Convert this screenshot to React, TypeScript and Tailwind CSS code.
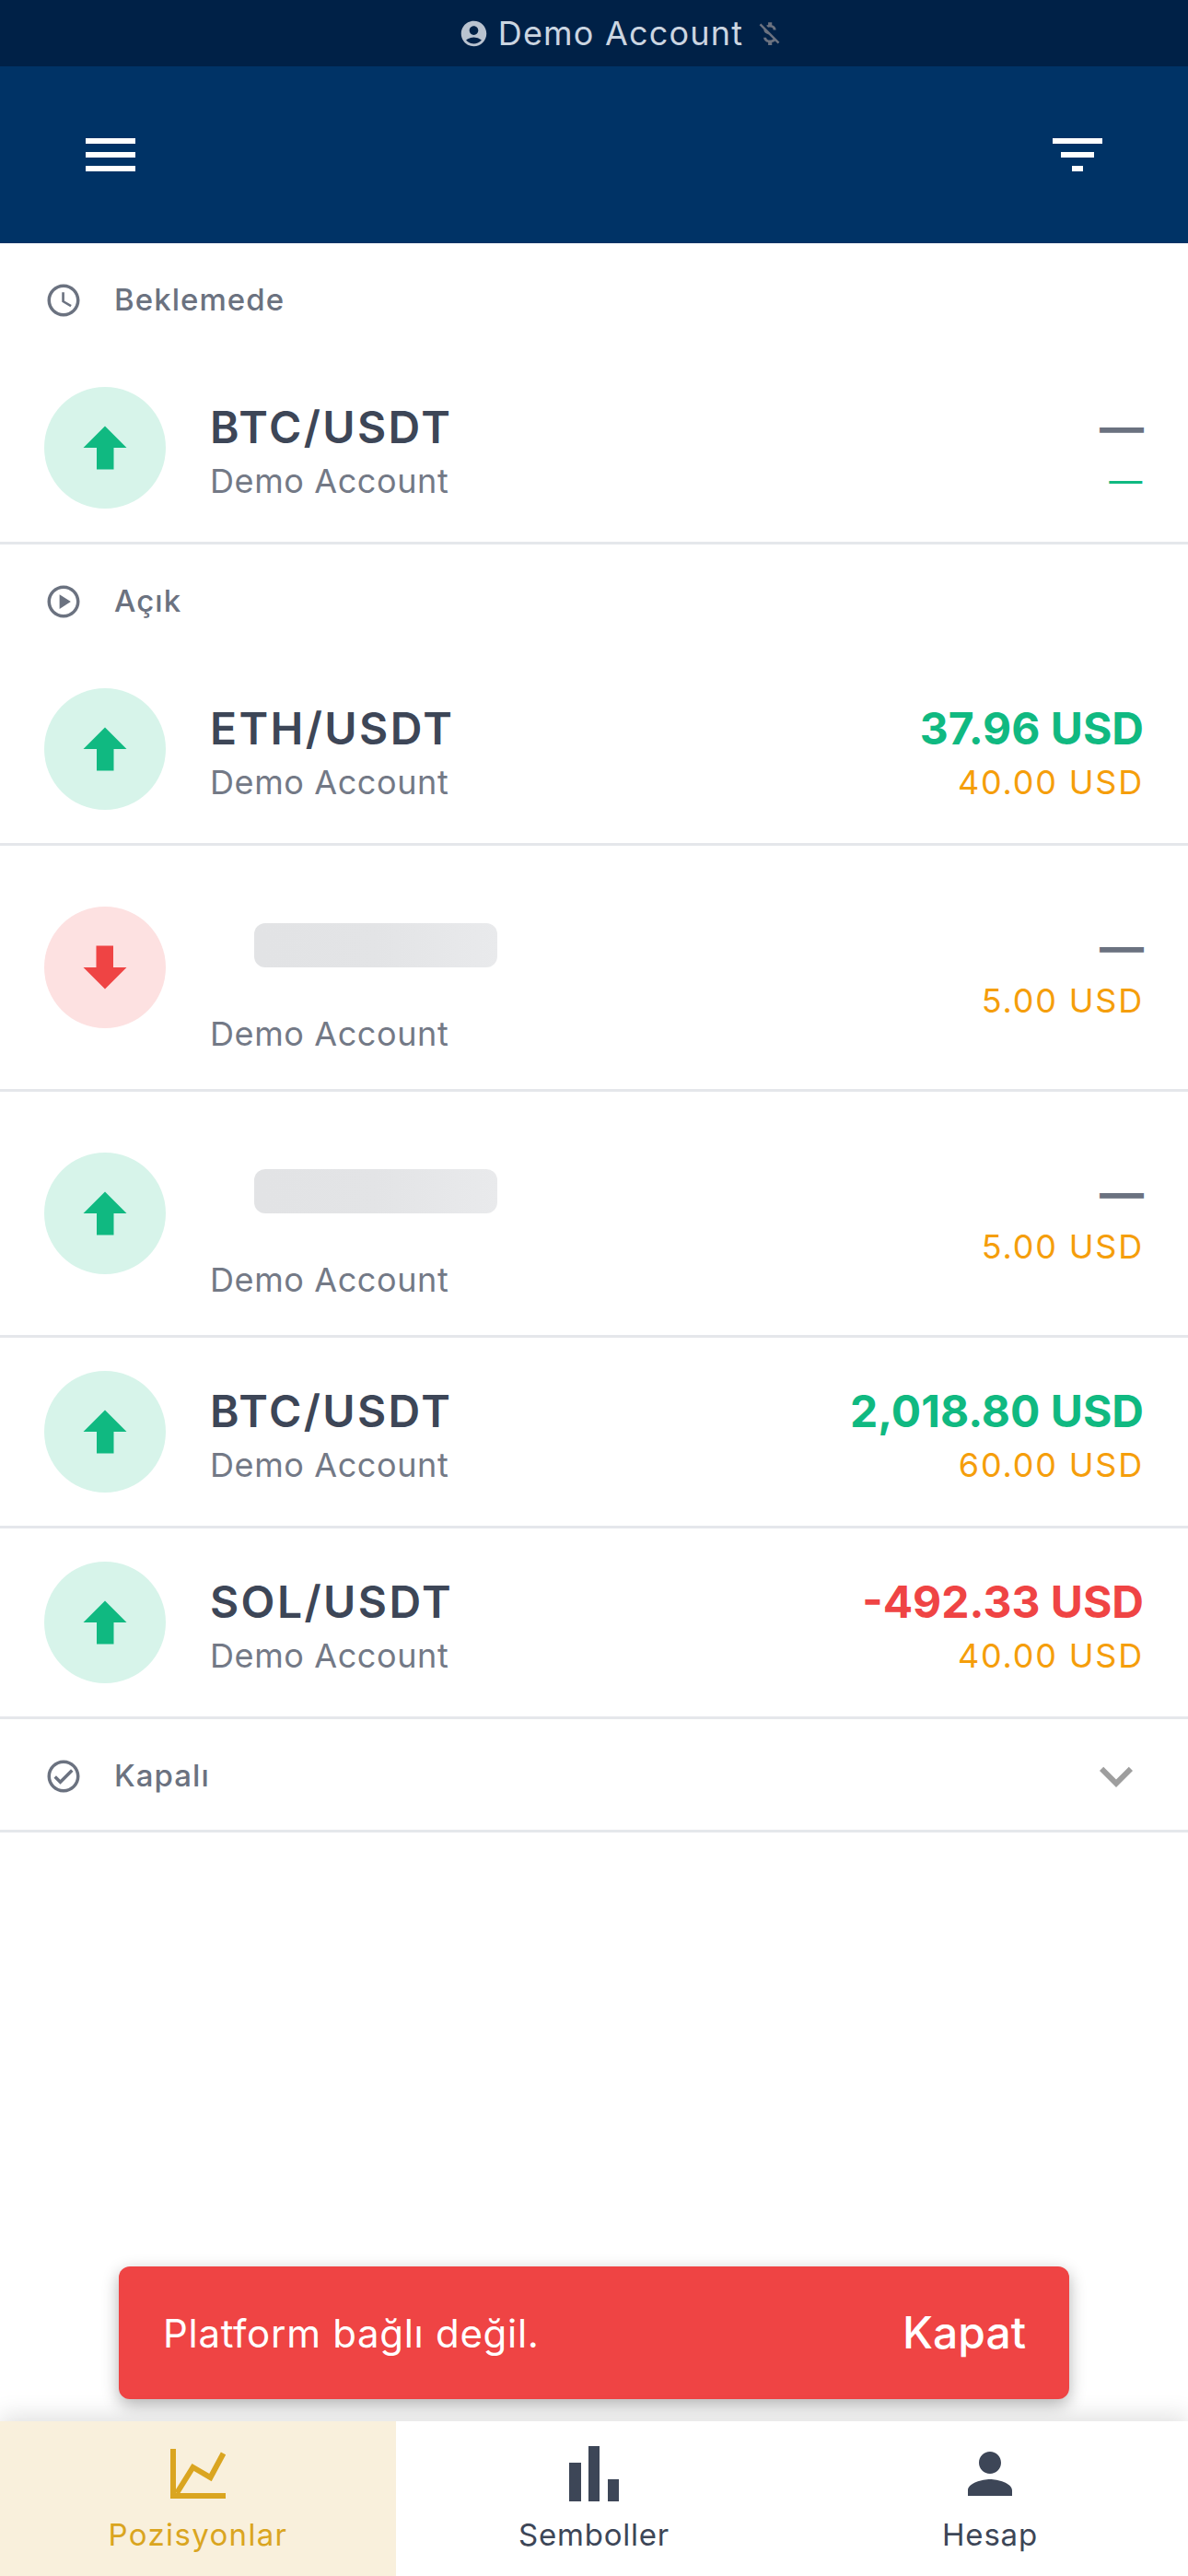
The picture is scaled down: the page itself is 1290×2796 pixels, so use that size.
import { MdAccessTime, MdAccountCircle, MdExpandMore, MdFilterList, MdMenu, MdMoneyOff, MdOutlineCheckCircle, MdOutlinePlayCircle, MdPerson } from 'react-icons/md'

type Position = {
  symbol?: string
  side: 'up' | 'down'
  pnl?: string
  pnlColor?: string
  amount: string
  amountColor?: string
}

const pending: Position[] = [
  { symbol: 'BTC/USDT', side: 'up', amount: '—', amountColor: 'text-[#10b981]' },
]

const open: Position[] = [
  { symbol: 'ETH/USDT', side: 'up', pnl: '37.96 USD', pnlColor: 'text-[#10b981]', amount: '40.00 USD' },
  { side: 'down', amount: '5.00 USD' },
  { side: 'up', amount: '5.00 USD' },
  { symbol: 'BTC/USDT', side: 'up', pnl: '2,018.80 USD', pnlColor: 'text-[#10b981]', amount: '60.00 USD' },
  { symbol: 'SOL/USDT', side: 'up', pnl: '-492.33 USD', pnlColor: 'text-[#ef4444]', amount: '40.00 USD' },
]

function SideBadge({ side }: { side: 'up' | 'down' }) {
  const isUp = side === 'up'
  return (
    <div className={`flex h-[132px] w-[132px] shrink-0 items-center justify-center rounded-full ${isUp ? 'bg-[#d7f4ea]' : 'bg-[#fde1e1]'}`}>
      <svg width="48" height="48" viewBox="0 0 48 48" className={isUp ? 'text-[#10b981]' : 'text-[#ef4444] rotate-180'}>
        <path d="M24 0.5 47.5 24H33.5V47.5H15V24H0.5Z" fill="currentColor" />
      </svg>
    </div>
  )
}

function PositionRow({ position }: { position: Position }) {
  return (
    <div className="flex items-center border-b-[3px] border-[#e5e7eb] px-12 py-9">
      <SideBadge side={position.side} />
      <div className="ml-12 flex-1">
        {position.symbol ? (
          <div className="pt-2">
            <div className="text-[48px] leading-[60px] font-semibold tracking-[2.4px] text-[#3d4657]">{position.symbol}</div>
            <div className="mt-1 text-[36px] leading-[48px] tracking-[0.6px] text-[#737986]">Demo Account</div>
          </div>
        ) : (
          <div className="pt-[48px]">
            <div className="mb-[48px] ml-12 h-12 w-[264px] rounded-xl bg-gradient-to-r from-[#e2e3e5] via-[#e3e4e6] to-[#e9eaec]" />
            <div className="text-[36px] leading-[48px] tracking-[0.6px] text-[#737986]">Demo Account</div>
          </div>
        )}
      </div>
      <div className="pt-2 text-right">
        <div className={`text-[48px] leading-[60px] font-bold ${position.pnlColor ?? 'text-[#6b7280]'}`}>{position.pnl ?? '—'}</div>
        <div className={`mt-1 text-[36px] leading-[48px] tracking-[1.8px] ${position.amountColor ?? 'text-[#f59e0b]'}`}>{position.amount}</div>
      </div>
    </div>
  )
}

function SectionHeader({ icon, label, trailing }: { icon: React.ReactNode; label: string; trailing?: React.ReactNode }) {
  return (
    <div className="flex h-[120px] items-center pl-12 pr-[42px] pt-[3px]">
      <span className="mr-[34px] text-[#6b7280]">{icon}</span>
      <span className="flex-1 text-[33px] font-medium tracking-[1.05px] text-[#6b7280]">{label}</span>
      {trailing}
    </div>
  )
}

export default function App() {
  return (
    <div className="relative flex h-[2796px] w-[1290px] flex-col overflow-hidden bg-white font-['Inter',sans-serif]">
      {/* Account strip */}
      <div className="flex h-[72px] items-center justify-center bg-[#002147] pl-[60px] text-[#cbd5e1]">
        <MdAccountCircle size={33} className="mr-[10px] text-[#b9c3d0]" />
        <span className="text-[36px] leading-[48px] tracking-[1.2px]">Demo Account</span>
        <MdMoneyOff size={33} className="ml-[12px] text-[#6b7280]" />
      </div>

      <header className="flex h-[192px] items-center justify-between bg-[#003366] px-[84px] text-white">
        <MdMenu size={72} />
        <MdFilterList size={72} />
      </header>

      <main className="flex-1">
        <SectionHeader icon={<MdAccessTime size={42} />} label="Beklemede" />
        <div>
          {pending.map((p, i) => <PositionRow key={i} position={p} />)}
        </div>
        <SectionHeader icon={<MdOutlinePlayCircle size={42} />} label="Açık" />
        <div>
          {open.map((p, i) => <PositionRow key={i} position={p} />)}
        </div>
        <div className="border-b-[3px] border-[#e5e7eb]">
          <SectionHeader
            icon={<MdOutlineCheckCircle size={42} />}
            label="Kapalı"
            trailing={<MdExpandMore size={72} className="text-[#9e9e9e]" />}
          />
        </div>
      </main>

      {/* Snackbar */}
      <div className="absolute bottom-[192px] left-[129px] flex h-[144px] w-[1032px] items-center justify-between rounded-xl bg-[#ef4444] pl-12 pr-[47px] text-white shadow-[0_6px_18px_rgba(0,0,0,0.3)]">
        <span className="text-[42px] tracking-[0.7px]">Platform bağlı değil.</span>
        <span className="text-[48px] font-medium">Kapat</span>
      </div>

      <nav className="z-10 grid h-[168px] grid-cols-3 bg-white shadow-[0_-6px_24px_rgba(0,0,0,0.12)]">
        <div className="flex flex-col items-center bg-[#f9f0dc] pt-[27px] text-[#daa520]">
          <div className="flex h-[60px] items-center">
            <svg width="60" height="54" viewBox="0 0 60 54" fill="none" stroke="currentColor" strokeWidth="6">
              <path d="M3 0V51H60" />
              <path d="M7 48 24.5 20 43.5 31 57.5 5" />
            </svg>
          </div>
          <span className="mt-[14px] text-[33px] leading-[44px] tracking-[1.35px]">Pozisyonlar</span>
        </div>
        <div className="flex flex-col items-center pt-[27px] text-[#3d4657]">
          <div className="flex h-[60px] items-center">
            <svg width="54" height="60" viewBox="0 0 54 60" fill="currentColor">
              <rect x="0" y="18" width="13" height="42" />
              <rect x="21" y="0" width="12" height="60" />
              <rect x="42" y="36" width="12" height="24" />
            </svg>
          </div>
          <span className="mt-[14px] text-[33px] leading-[44px] tracking-[0.8px]">Semboller</span>
        </div>
        <div className="flex flex-col items-center pt-[27px] text-[#3d4657]">
          <div className="flex h-[60px] items-center">
            <MdPerson size={72} />
          </div>
          <span className="mt-[14px] text-[33px] leading-[44px] tracking-[0.8px]">Hesap</span>
        </div>
      </nav>
    </div>
  )
}
